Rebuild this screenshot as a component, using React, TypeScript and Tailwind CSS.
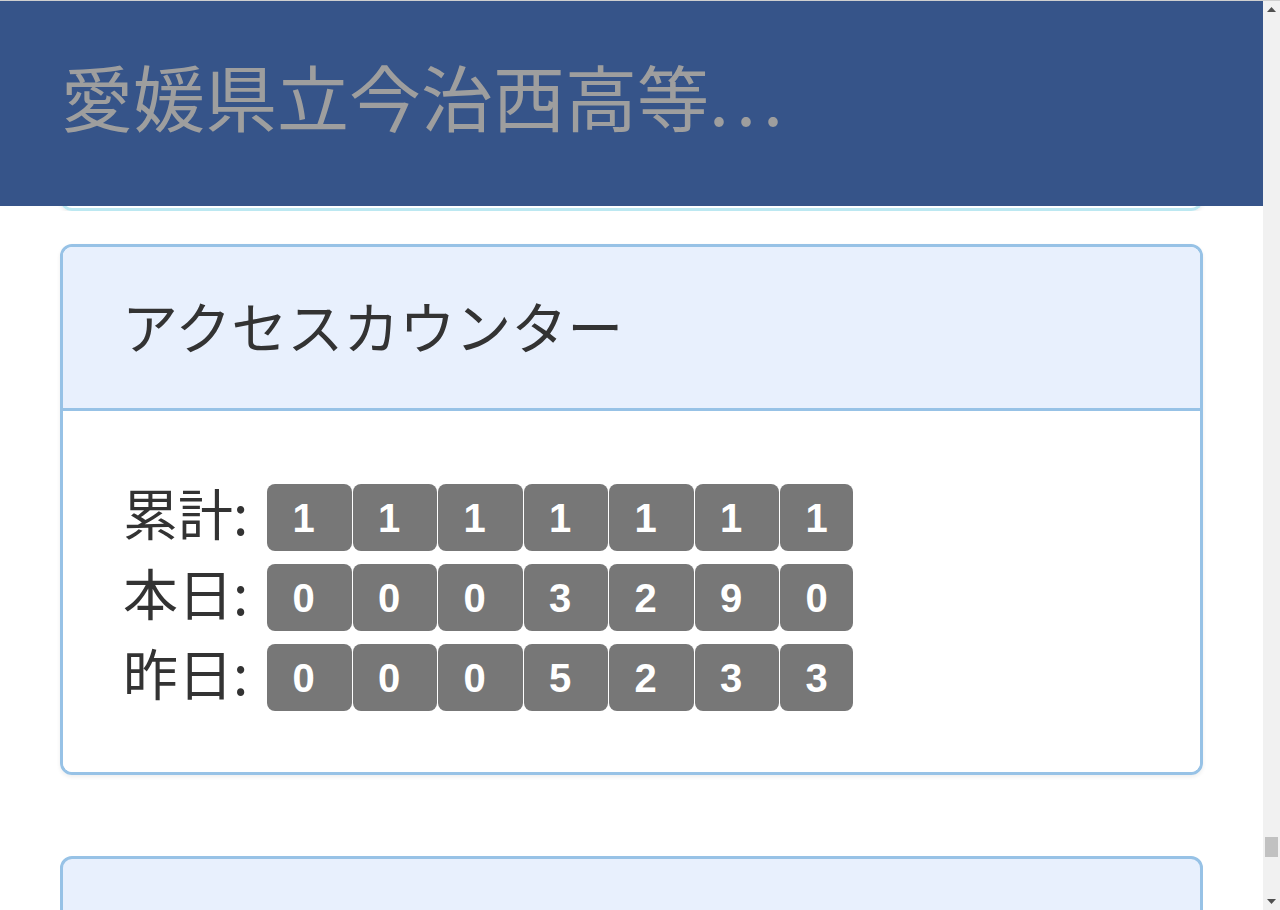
import React from "react";

const jp = { fontFamily: '"Noto Sans CJK JP", "Noto Sans", sans-serif' };
const arial = { fontFamily: '"Liberation Sans", Arial, sans-serif' };

function Digits({ value }: { value: string }) {
  const ds = value.split("");
  return (
    <div className="flex gap-[1px]">
      {ds.map((d, i) => {
        const last = i === ds.length - 1;
        return (
          <div
            key={i}
            className={`flex h-[67px] items-center rounded-[8px] bg-[#777777] ${last ? "w-[73px]" : "w-[84.5px]"}`}
          >
            <span
              className="block w-[73px] text-center text-[40px] font-bold leading-none text-white"
              style={arial}
            >
              {d}
            </span>
          </div>
        );
      })}
    </div>
  );
}

function Row({ label, value }: { label: string; value: string }) {
  return (
    <div className="flex h-[67px] items-center">
      <div className="w-[144px] shrink-0 pb-[12px] text-[55px] leading-none text-[#333333]" style={jp}>
        {label}
      </div>
      <Digits value={value} />
    </div>
  );
}

export default function App() {
  return (
    <div className="flex h-[910px] flex-col overflow-hidden bg-white">
      <div className="h-[1px] w-full shrink-0 bg-[#cfcfcf]" />
      <div className="flex min-h-0 flex-1">
        <main className="flex min-w-0 flex-1 flex-col">
          <header className="flex h-[205px] shrink-0 items-center bg-[#365489] pl-[61px] pb-[18px]">
            <h1 className="text-[72px] font-normal leading-none text-[#9e9e9e]" style={jp}>
              愛媛県立今治西高等<span className="tracking-[7px]">...</span>
            </h1>
          </header>
          <div className="h-[5px] shrink-0 overflow-hidden px-[60px]">
            <div className="-mt-[15px] h-[20px] rounded-b-[12px] border-[3px] border-t-0 border-[#bce8f1] shadow-[0_2px_4px_rgba(0,0,0,0.08)]" />
          </div>
          <div className="px-[60px] pt-[33px]">
            <section className="overflow-hidden rounded-[12px] border-[3px] border-[#97c2e6] shadow-[0_2px_4px_rgba(0,0,0,0.07)]">
              <div className="flex h-[164px] items-center border-b-[3px] border-[#97c2e6] bg-[#e8f0fd] pl-[59px] pb-[6px]">
                <h2 className="text-[56px] font-normal leading-none text-[#333333]" style={jp}>
                  アクセスカウンター
                </h2>
              </div>
              <div className="flex flex-col gap-[13px] bg-white pl-[60px] pt-[73px] pb-[61px]">
                <Row label="累計:" value="1111111" />
                <Row label="本日:" value="0003290" />
                <Row label="昨日:" value="0005233" />
              </div>
            </section>
            <section className="mt-[81px] h-[80px] rounded-[12px] border-[3px] border-[#97c2e6] bg-[#e8f0fd]" />
          </div>
        </main>
        <div className="flex w-[17px] shrink-0 flex-col items-center bg-[#f1f1f1]">
          <div className="flex h-[17px] w-full items-center justify-center">
            <svg width="9" height="5" viewBox="0 0 9 5">
              <polygon points="4.5,0 9,5 0,5" fill="#505050" />
            </svg>
          </div>
          <div className="flex-1" />
          <div className="mb-[36px] h-[20px] w-[13px] bg-[#c1c1c1]" />
          <div className="flex h-[17px] w-full items-center justify-center">
            <svg width="9" height="5" viewBox="0 0 9 5">
              <polygon points="0,0 9,0 4.5,5" fill="#505050" />
            </svg>
          </div>
        </div>
      </div>
    </div>
  );
}
